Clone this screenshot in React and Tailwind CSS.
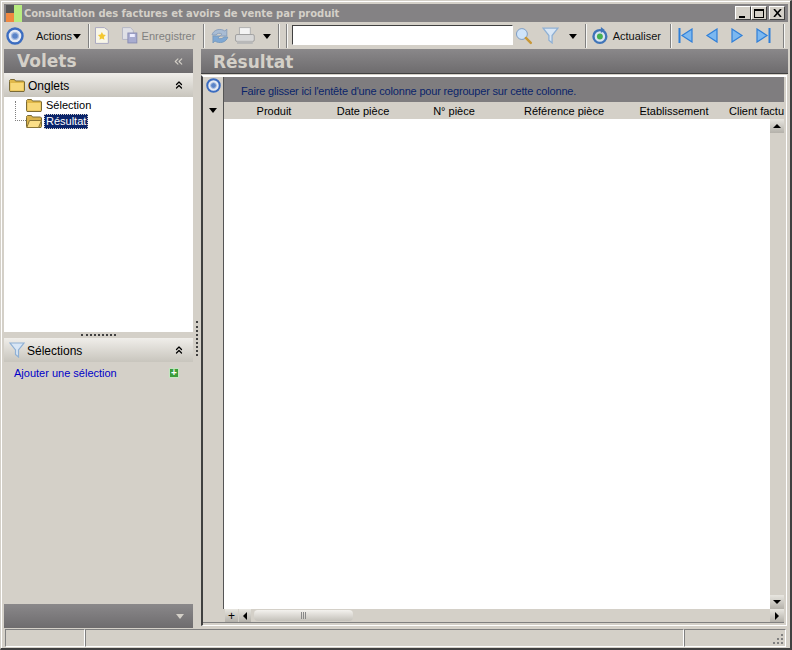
import { ChevronsLeft, ChevronsUp } from 'lucide-react'

const Sep = () => <div className="w-[2px] h-[24px] mx-[3px] border-l border-[#808080] shrink-0 bg-white/80" />

const Caret = ({ className = '' }) => (
  <svg width="8" height="5" viewBox="0 0 8 5" className={className}><path d="M0 0h8L4 5z" fill="#000" /></svg>
)

const Target = ({ size = 18 }) => (
  <svg width={size} height={size} viewBox="0 0 18 18">
    <circle cx="9" cy="9" r="7.500" fill="#e6ebf4" stroke="#3b6cc0" strokeWidth="2.400" />
    <circle cx="9" cy="9" r="3.400" fill="#5a84c8" stroke="#a9bde0" strokeWidth="1.200" />
  </svg>
)

const Folder = ({ open = false }) => (
  <svg width="16" height="13" viewBox="0 0 16 13">
    <path d="M.5 2.500V1.500l1-1h4l1 1.500h8l1 1v8.500l-.5 1H1l-.5-1z" fill={open ? '#d9b24a' : '#e0b84a'} stroke="#7a6a35" />
    {open
      ? <path d="M3.500 5.500h12l-3 7H.8z" fill="#fbdf88" stroke="#8a7535" />
      : <path d="M1.500 4h13v7.500h-13z" fill="#f8d878" />}
  </svg>
)

const Funnel = ({ size = 16 }) => (
  <svg width={size} height={size} viewBox="0 0 16 16">
    <path d="M1 1h14L9.500 8v7L6.500 12.500V8z" fill="#d8e6f5" stroke="#8fb0d4" strokeWidth="1.200" />
  </svg>
)

const NavArrow = ({ dir, bar }) => (
  <svg width="15" height="15" viewBox="0 0 15 15">
    {dir === 'left'
      ? <path d={bar ? 'M14 1v13L4 7.500z' : 'M13 1v13L3 7.500z'} fill="#7cb8f0" stroke="#2f7fd8" strokeWidth="1.200" />
      : <path d={bar ? 'M1 1v13l10-6.500z' : 'M2 1v13l10-6.500z'} fill="#7cb8f0" stroke="#2f7fd8" strokeWidth="1.200" />}
    {bar && <path d={dir === 'left' ? 'M1.500 0v15' : 'M13.500 0v15'} stroke="#2f7fd8" strokeWidth="2" />}
  </svg>
)

const WinButton = ({ children }) => (
  <div className="w-[16px] h-[14px] bg-[#d4d0c8] border border-t-white border-l-white border-r-[#404040] border-b-[#404040] flex items-center justify-center">
    {children}
  </div>
)

const ScrollBtn = ({ d, className = 'w-[14px] h-[14px]' }) => (
  <div className={`${className} bg-gradient-to-b from-[#e8e6e0] to-[#b4b1aa] flex items-center justify-center shrink-0`}>
    <svg width="8" height="8" viewBox="0 0 8 8"><path d={d} fill="#000" /></svg>
  </div>
)

const columns = [
  ['Produit', 'w-[100px]'],
  ['Date pièce', 'w-[78px]'],
  ['N° pièce', 'w-[104px]'],
  ['Référence pièce', 'w-[116px]'],
  ['Etablissement', 'w-[104px]'],
]

export default function App() {
  return (
    <div className="w-[792px] h-[650px] bg-[#d4d0c8] flex flex-col overflow-hidden border-t border-l border-t-[#d4d0c8] border-l-[#d4d0c8] border-b-2 border-b-[#404040] border-r-2 border-r-[#404040] text-[11px] text-black" style={{ fontFamily: '"Liberation Sans", sans-serif' }}>
      <div className="pt-[2px] pl-[2px] pr-[2px] flex flex-col flex-1 min-h-0 border-l border-t border-white">
        {/* Title bar */}
        <div className="h-[18px] bg-[#848284] flex items-center shrink-0">
          <svg width="16" height="17" viewBox="0 0 16 17" className="ml-[2px] shrink-0">
            <rect x="0" y="0" width="8" height="8" fill="#555" />
            <rect x="0" y="8" width="8" height="9" fill="#f08840" />
            <rect x="8" y="0" width="8" height="17" fill="#b8ec80" />
          </svg>
          <span className="ml-[2px] font-bold text-[#d4d0c8] text-[10px] tracking-[-0.05px] whitespace-nowrap" style={{ fontFamily: '"DejaVu Sans", sans-serif' }}>
            Consultation des factures et avoirs de vente par produit
          </span>
          <div className="ml-auto flex items-center mr-[3px]">
            <WinButton><div className="w-[6px] h-[2px] bg-black mt-[7px] -ml-[3px]" /></WinButton>
            <WinButton><div className="w-[10px] h-[9px] border border-black border-t-2" /></WinButton>
            <div className="ml-[2px]">
              <WinButton>
                <svg width="9" height="8" viewBox="0 0 9 8"><path d="M1 0l7 8M8 0L1 8" stroke="#000" strokeWidth="1.600" /></svg>
              </WinButton>
            </div>
          </div>
        </div>

        {/* Toolbar */}
        <div className="h-[27px] flex items-center shrink-0 text-[#111]">
          <div className="ml-[2px] w-[18px]"><Target /></div>
          <span className="ml-[12px] mt-[2px]">Actions</span>
          <Caret className="ml-[1px] mt-[1px]" />
          <div className="ml-[4px]"><Sep /></div>
          <svg width="16" height="17" viewBox="0 0 16 17" className="ml-[1px]">
            <path d="M1.500.5h9l4 3v13h-13z" fill="#f8f6e8" stroke="#a9a8c0" />
            <path d="M8 5l1.300 2.600 2.700.4-2 2 .5 2.800L8 11.500 5.500 12.800l.5-2.800-2-2 2.700-.4z" fill="#f4c830" />
          </svg>
          <svg width="17" height="17" viewBox="0 0 17 17" className="ml-[11px]">
            <path d="M1.500.5h8l3 3v9h-11z" fill="#dfe0e6" stroke="#b4b6c4" />
            <rect x="7" y="6" width="9" height="10" fill="#a8acd0" stroke="#8a8eb4" />
            <rect x="9" y="7" width="5" height="3" fill="#eef" />
          </svg>
          <span className="ml-[4px] mt-[2px] text-[#808080]">Enregistrer</span>
          <div className="ml-[5px]"><Sep /></div>
          <svg width="18" height="18" viewBox="0 0 18 18" className="ml-[3px]">
            <path d="M1 8a8 7 0 0 1 13-4l2-2v7H9l2-2a4 3.500 0 0 0-6 1z" fill="#a8bcd4" stroke="#8aa0bc" />
            <path d="M17 10a8 7 0 0 1-13 4l-2 2V9h7l-2 2a4 3.500 0 0 0 6-1z" fill="#7ea8d4" stroke="#7a9abc" />
          </svg>
          <svg width="20" height="18" viewBox="0 0 20 18" className="ml-[6px]">
            <rect x="4.500" y=".5" width="11" height="7" fill="#f4f4f4" stroke="#b0b0b0" />
            <rect x=".5" y="7.500" width="19" height="7" rx="1.500" fill="#d8d8d8" stroke="#a0a0a0" />
            <rect x="2" y="14" width="16" height="3" fill="#b8b8b8" />
          </svg>
          <Caret className="ml-[8px] mt-[1px]" />
          <div className="ml-[4px] flex"><Sep /><Sep /></div>
          <div className="ml-[1px] w-[224px] h-[20px] mb-[1px] bg-white border border-t-[#404040] border-l-[#404040] border-r-white border-b-white" />
          <svg width="18" height="18" viewBox="0 0 18 18" className="ml-[2px]">
            <circle cx="7" cy="7" r="5.500" fill="#cfe4fa" stroke="#7d9cc4" />
            <path d="M11 11l5 5" stroke="#c89838" strokeWidth="2.500" strokeLinecap="round" />
          </svg>
          <div className="ml-[9px]"><Funnel size={17} /></div>
          <Caret className="ml-[10px] mt-[1px]" />
          <div className="ml-[5px]"><Sep /></div>
          <svg width="18" height="18" viewBox="0 0 18 18" className="ml-[1px]">
            <circle cx="9" cy="9.500" r="6.500" fill="#d8e4f0" stroke="#3f74b8" strokeWidth="2.400" />
            <circle cx="9" cy="9.500" r="3" fill="#44b050" />
            <path d="M10 0l4 3-4 3z" fill="#3f74b8" />
          </svg>
          <span className="ml-[4px] mt-[2px]">Actualiser</span>
          <div className="ml-[6px]"><Sep /></div>
          <div className="ml-[3px] flex items-center gap-[11px]">
            <NavArrow dir="left" bar />
            <NavArrow dir="left" />
            <NavArrow dir="right" />
            <NavArrow dir="right" bar />
          </div>
          <div className="ml-[9px]"><Sep /></div>
        </div>

        {/* Body */}
        <div className="flex-1 flex min-h-0">
          {/* Left pane */}
          <div className="w-[189px] flex flex-col shrink-0">
            <div className="h-[24px] bg-gradient-to-b from-[#8a888a] to-[#6e6c6e] flex items-center justify-between pl-[13px] pr-[8px] shrink-0">
              <span className="font-bold text-[17px] text-[#d4d0c8] mt-[2px]" style={{ fontFamily: '"DejaVu Sans", sans-serif' }}>Volets</span>
              <ChevronsLeft size={13} className="text-[#d4d0c8]" />
            </div>
            <div className="h-[24px] bg-gradient-to-b from-[#f0eeea] to-[#c8c5bd] flex items-center px-[5px] shrink-0">
              <Folder />
              <span className="ml-[3px] mt-[2px] text-[12px]">Onglets</span>
              <ChevronsUp size={12} className="ml-auto mr-[3px]" strokeWidth={2.500} />
            </div>
            <div className="h-[235px] bg-white shrink-0">
              <div className="flex items-center h-[16px] pl-[22px]">
                <Folder />
                <span className="ml-[4px]">Sélection</span>
              </div>
              <div className="flex items-center h-[16px] pl-[22px] relative">
                <div className="absolute left-[11px] -top-[12px] w-[11px] h-[20px] border-l border-b border-dotted border-[#808080]" />
                <Folder open />
                <span className="ml-[2px] px-[1px] bg-[#0a246a] text-white border border-dotted border-[#d4d0c8] leading-[13px]">Résultat</span>
              </div>
            </div>
            <div className="h-[6px] flex justify-center items-center shrink-0">
              <div className="w-[35px] border-t-2 border-dotted border-[#404040]" />
            </div>
            <div className="h-[24px] bg-gradient-to-b from-[#f0eeea] to-[#c8c5bd] flex items-center px-[5px] shrink-0">
              <Funnel />
              <span className="ml-[2px] mt-[2px] text-[12px]">Sélections</span>
              <ChevronsUp size={12} className="ml-auto mr-[3px]" strokeWidth={2.500} />
            </div>
            <div className="flex-1 flex items-start justify-between pl-[10px] pr-[14px] pt-[3px]">
              <span className="text-[#0000c8]">Ajouter une sélection</span>
              <div className="w-[10px] h-[10px] mt-[3px] bg-[#3c9c3c] border border-[#c4e4c0] flex items-center justify-center text-white font-bold text-[10px] leading-none">+</div>
            </div>
            <div className="h-[24px] bg-gradient-to-b from-[#8a888a] to-[#6e6c6e] flex items-center justify-end pr-[9px] shrink-0">
              <svg width="8" height="5" viewBox="0 0 8 5"><path d="M0 0h8L4 5z" fill="#d4d0c8" /></svg>
            </div>
          </div>

          {/* Splitter */}
          <div className="w-[8px] flex flex-col items-center shrink-0 pt-[272px]">
            <div className="h-[35px] border-l-2 border-dotted border-[#404040]" />
          </div>

          {/* Right pane */}
          <div className="flex-1 flex flex-col min-w-0">
            <div className="h-[25px] bg-gradient-to-b from-[#8a888a] to-[#6e6c6e] flex items-center pl-[12px] shrink-0 border-b border-[#404040]">
              <span className="font-bold text-[17px] text-[#d4d0c8] mt-[3px]" style={{ fontFamily: '"DejaVu Sans", sans-serif' }}>Résultat</span>
            </div>
            <div className="h-[551px] mt-[1px] mr-[1px] border-t-2 border-r border-b border-l-2 border-t-white border-r-white border-b-white border-l-[#404040] bg-[#d4d0c8] flex flex-col shrink-0">
              <div className="flex-1 flex min-h-0">
                <div className="w-[21px] flex flex-col items-center border-r border-[#555] shrink-0">
                  <div className="mt-[1px]"><Target size={15} /></div>
                  <Caret className="mt-[15px]" />
                </div>
                <div className="flex-1 flex flex-col min-w-0 mr-[2px]">
                  <div className="h-[25px] bg-[#7f7d7f] flex items-center pl-[17px] pt-[3px] text-[#0a246a] tracking-[-0.18px] shrink-0">
                    Faire glisser ici l'entête d'une colonne pour regrouper sur cette colonne.
                  </div>
                  <div className="h-[17px] flex items-center pt-[2px] shrink-0 overflow-hidden">
                    {columns.map(([label, w]) => (
                      <div key={label} className={`${w} text-center shrink-0 whitespace-nowrap`}>{label}</div>
                    ))}
                    <div className="ml-[3px] whitespace-nowrap">Client factu</div>
                  </div>
                  <div className="flex-1 flex bg-white min-h-0">
                    <div className="flex-1" />
                    <div className="w-[14px] flex flex-col bg-[#d4d0c8] justify-between">
                      <ScrollBtn d="M4 2l4 4H0z" />
                      <ScrollBtn d="M0 2h8L4 6z" />
                    </div>
                  </div>
                </div>
              </div>
              {/* Horizontal scroller */}
              <div className="h-[14px] flex items-center border-b border-[#808080] shrink-0 pl-[22px] mr-[2px] mb-[2px]">
                <div className="w-[13px] h-[13px] bg-gradient-to-b from-[#e8e6e0] to-[#b4b1aa] flex items-center justify-center text-[12px] leading-none shrink-0">+</div>
                <div className="ml-[1px]"><ScrollBtn d="M6 0v8L2 4z" className="w-[12px] h-[13px]" /></div>
                <div className="ml-[3px] w-[99px] h-[11px] rounded-[4px] bg-gradient-to-b from-[#f4f2ee] to-[#c4c1ba] flex items-center justify-center gap-[1px] shrink-0">
                  <span className="w-[1px] h-[7px] bg-[#888]" /><span className="w-[1px] h-[7px] bg-[#888]" /><span className="w-[1px] h-[7px] bg-[#888]" />
                </div>
                <div className="ml-auto"><ScrollBtn d="M2 0v8l4-4z" className="w-[14px] h-[13px]" /></div>
              </div>
            </div>
          </div>
        </div>

        {/* Status bar */}
        <div className="h-[19px] mt-[1px] flex shrink-0 pl-[1px] pr-[2px] pb-[1px]">
          <div className="w-[80px] border border-t-[#808080] border-l-[#808080] border-r-white border-b-white" />
          <div className="w-[599px] border border-t-[#808080] border-l-[#808080] border-r-white border-b-white" />
          <div className="flex-1 border border-t-[#808080] border-l-[#808080] border-r-white border-b-white flex items-end justify-end p-[1px]">
            <svg width="12" height="12" viewBox="0 0 12 12">
              <path d="M9 1h2v2H9zM5 5h2v2H5zM9 5h2v2H9zM1 9h2v2H1zM5 9h2v2H5zM9 9h2v2H9z" fill="#808080" />
            </svg>
          </div>
        </div>
      </div>
    </div>
  )
}
